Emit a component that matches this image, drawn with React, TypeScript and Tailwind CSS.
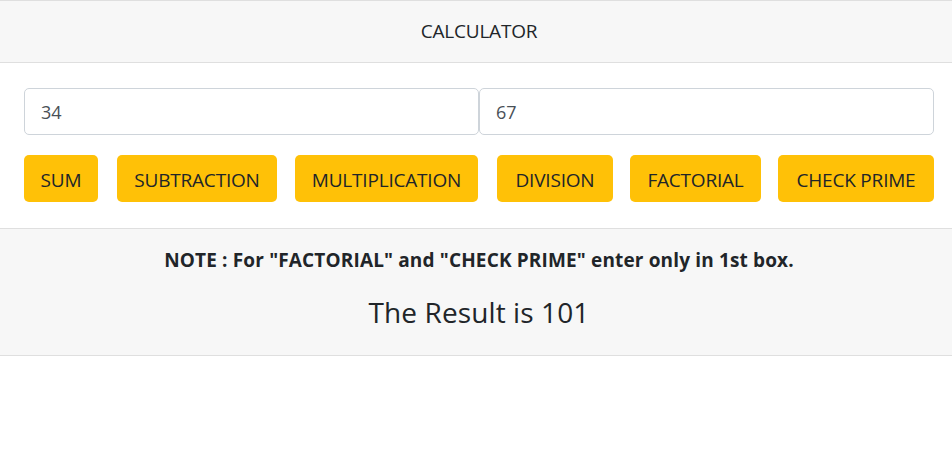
import React from "react";

const buttons = [
  { label: "SUM", c: "w-[74px]" },
  { label: "SUBTRACTION", c: "w-[160px] ml-[19px]" },
  { label: "MULTIPLICATION", c: "w-[183px] ml-[18px]" },
  { label: "DIVISION", c: "w-[116px] ml-[19px]" },
  { label: "FACTORIAL", c: "w-[131px] ml-[17px]" },
  { label: "CHECK PRIME", c: "w-[156px] ml-[17px]" },
];

export default function App() {
  return (
    <div className="w-[952px] h-[451px] overflow-hidden bg-white">
      <div className="w-[958px] text-[#212529]" style={{ fontFamily: '"Open Sans", "Noto Sans", sans-serif' }}>
        <div className="border-t border-b border-[#dfdfdf]">
          <div className="h-[61px] bg-[#f7f7f7] flex items-center justify-center text-[19px] tracking-[-0.2px]">CALCULATOR</div>
        </div>
        <div className="px-6 pt-[25px] pb-[26px]">
          <div className="flex">
            <input
              readOnly
              value="34"
              className="w-1/2 h-[47px] border border-[#ced4da] rounded-[5px] px-4 text-[18px] text-[#495057] outline-none"
            />
            <input
              readOnly
              value="67"
              className="w-1/2 h-[47px] border border-[#ced4da] rounded-[5px] px-4 text-[18px] text-[#495057] outline-none"
            />
          </div>
          <div className="flex mt-[20px]">
            {buttons.map((b) => (
              <button
                key={b.label}
                className={`${b.c} shrink-0 h-[47px] pt-[3px] bg-[#ffc107] rounded-[5px] text-[19px] tracking-[-0.2px] text-[#212529] flex items-center justify-center`}
              >
                {b.label}
              </button>
            ))}
          </div>
        </div>
        <div className="border-t border-b border-[#dfdfdf] bg-[#f7f7f7] h-[128px] flex flex-col items-center">
          <div className="mt-[17px] text-[19px] font-bold tracking-[0.15px]">
            NOTE : For "FACTORIAL" and "CHECK PRIME" enter only in 1st box.
          </div>
          <div className="mt-[16px] text-[28px] tracking-[0.1px]">The Result is 101</div>
        </div>
      </div>
    </div>
  );
}
